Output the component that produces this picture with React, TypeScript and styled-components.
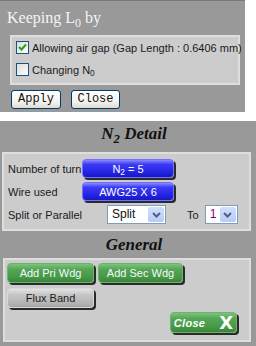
import React, { FunctionComponent } from 'react';
import styled, { createGlobalStyle, css } from 'styled-components';

const GlobalStyle = createGlobalStyle`
  html, body {
    margin: 0;
    padding: 0;
    background: #ffffff;
  }
  body {
    font-family: 'Liberation Sans', Arial, sans-serif;
    font-size: 11px;
    color: #111111;
  }
`;

const Page = styled.div`
  width: 256px;
  height: 346px;
  overflow: hidden;
  display: flex;
  flex-direction: column;
`;

const Panel = styled.div<{ wide?: boolean }>`
  background: #999999;
  width: ${({ wide }) => (wide ? '256px' : '245px')};
  box-sizing: border-box;
  display: flex;
  flex-direction: column;
`;

const TopPanel = styled(Panel)`
  height: 112px;
  border-top: 1px solid #7a7a7a;
  padding-top: 7px;
`;

const BottomPanel = styled(Panel)`
  margin-top: 9px;
  flex: 1;
  padding-top: 3px;
`;

const KeepTitle = styled.div`
  font-family: 'Liberation Serif', 'Times New Roman', serif;
  font-size: 16px;
  line-height: 20px;
  color: #f4f4f8;
  padding-left: 7px;
`;

const Sub = styled.span`
  font-size: 0.75em;
  position: relative;
  top: 0.35em;
`;

const Text = styled.span`
  white-space: nowrap;
`;

const SectionTitle = styled.div<{ gapTop?: number }>`
  font-family: 'Liberation Serif', 'Times New Roman', serif;
  font-style: italic;
  font-weight: bold;
  font-size: 17px;
  line-height: 20px;
  color: #111111;
  text-align: center;
  padding-left: 12px;
  margin-top: ${({ gapTop }) => gapTop || 0}px;
`;

const InsetBox = styled.div`
  background: #cccccc;
  border: 2px solid #dedede;
  box-sizing: border-box;
`;

const OptionBox = styled(InsetBox)`
  margin: 6px 0 0 10px;
  width: 230px;
  height: 50px;
  padding: 4px 0 0 4px;
  display: flex;
  flex-direction: column;
  gap: 9px;
`;

const OptionRow = styled.label`
  display: flex;
  align-items: center;
  gap: 3px;
  height: 13px;
  font-size: 11px;
  color: #1a1a1a;
  white-space: nowrap;
`;

const CheckBox = styled.span`
  width: 13px;
  height: 13px;
  box-sizing: border-box;
  border: 1px solid #1c5180;
  background: linear-gradient(135deg, #dcdcd7 0%, #f4f4f2 70%, #ffffff 100%);
  display: flex;
  align-items: center;
  justify-content: center;
  flex-shrink: 0;
`;

const ActionRow = styled.div`
  display: flex;
  gap: 10px;
  margin: 5px 0 0 11px;
`;

const PlainButton = styled.button<{ w: number }>`
  width: ${({ w }) => w}px;
  height: 19px;
  padding: 0;
  border: 1px solid #003c74;
  border-radius: 3px;
  background: linear-gradient(#ffffff 0%, #f5f4ef 60%, #dedbd0 100%);
  font-family: 'Liberation Mono', 'Courier New', monospace;
  font-size: 12px;
  color: #111111;
  line-height: 17px;
`;

const DetailBox = styled(InsetBox)`
  margin: 7px 0 0 2px;
  width: 249px;
  height: 79px;
  padding: 3px 0 0 4px;
  display: flex;
  flex-direction: column;
`;

const FieldRow = styled.div`
  display: flex;
  align-items: center;
  height: 23px;
`;

const FieldLabel = styled.span<{ w: number }>`
  width: ${({ w }) => w}px;
  font-size: 11px;
  color: #1a1a1a;
  white-space: nowrap;
`;

const bevel = css`
  border-radius: 4px;
  box-shadow: 2px 2px 0 #2a2a2a;
  font-family: 'Liberation Sans', Arial, sans-serif;
  font-size: 11px;
  padding: 0;
  display: flex;
  align-items: center;
  justify-content: center;
  white-space: nowrap;
`;

const BlueButton = styled.button`
  ${bevel}
  width: 92px;
  height: 19px;
  border: 1px solid #7070ff;
  background: linear-gradient(#8a8aff 0%, #3c3cf6 25%, #2424e4 70%, #1818c4 100%);
  color: #ffffff;
`;

const GreenButton = styled.button<{ w: number }>`
  ${bevel}
  width: ${({ w }) => w}px;
  height: 20px;
  border: 1px solid #6bb46b;
  background: linear-gradient(#7cc47c 0%, #55a555 30%, #459845 75%, #3a843a 100%);
  color: #f4f8ff;
`;

const GrayButton = styled.button`
  ${bevel}
  width: 87px;
  height: 20px;
  border: 1px solid #d8d8d8;
  background: linear-gradient(#e2e2e2 0%, #c4c4c4 35%, #b4b4b4 80%, #a4a4a4 100%);
  color: #1a1a1a;
`;

const Select = styled.div<{ w: number }>`
  width: ${({ w }) => w}px;
  height: 19px;
  box-sizing: border-box;
  border: 1px solid #7f9db9;
  background: #ffffff;
  display: flex;
  align-items: stretch;
`;

const SelectValue = styled.span<{ tone?: string }>`
  flex: 1;
  padding-left: 4px;
  font-size: 12px;
  line-height: 17px;
  color: ${({ tone }) => tone || '#111111'};
`;

const SelectArrow = styled.span`
  width: 16px;
  margin: 1px;
  border-radius: 2px;
  background: linear-gradient(#d2defc, #b7cbf8);
  display: flex;
  align-items: center;
  justify-content: center;
`;

const ToLabel = styled.span`
  margin: 0 6px 0 21px;
  font-size: 11px;
  color: #1a1a1a;
`;

const GeneralBox = styled(InsetBox)`
  margin: 3px 0 0 3px;
  width: 248px;
  height: 84px;
  padding: 3px 0 0 2px;
  display: flex;
  flex-direction: column;
  gap: 5px;
`;

const ButtonRow = styled.div`
  display: flex;
  gap: 4px;
`;

const CloseButton = styled(GreenButton)`
  align-self: flex-end;
  margin: -1px 12px 0 0;
  height: 21px;
  gap: 14px;
  color: #ffffff;
`;

const CloseText = styled.span`
  font-style: italic;
  font-weight: bold;
  font-size: 11px;
  letter-spacing: 0.3px;
`;

const CloseX = styled.span`
  font-family: 'DejaVu Sans', sans-serif;
  font-weight: bold;
  font-size: 18px;
  line-height: 18px;
`;

const Chevron: FunctionComponent = () => (
  <svg width='9' height='6' viewBox='0 0 9 6'>
    <path d='M1 1 L4.5 4.5 L8 1' stroke='#4d6185' strokeWidth='2' fill='none' />
  </svg>
);

const Tick: FunctionComponent = () => (
  <svg width='9' height='9' viewBox='0 0 9 9'>
    <path d='M1 4 L3.5 6.5 L8 1.5' stroke='#21a121' strokeWidth='2' fill='none' />
  </svg>
);

const App: FunctionComponent = () => (
  <Page>
    <GlobalStyle />
    <TopPanel>
      <KeepTitle>
        Keeping L<Sub>0</Sub> by
      </KeepTitle>
      <OptionBox>
        <OptionRow>
          <CheckBox>
            <Tick />
          </CheckBox>
          <Text>Allowing air gap (Gap Length : 0.6406 mm)</Text>
        </OptionRow>
        <OptionRow>
          <CheckBox />
          <Text>Changing N<Sub>0</Sub></Text>
        </OptionRow>
      </OptionBox>
      <ActionRow>
        <PlainButton w={ 50 }>Apply</PlainButton>
        <PlainButton w={ 49 }>Close</PlainButton>
      </ActionRow>
    </TopPanel>

    <BottomPanel wide>
      <SectionTitle>
        N<Sub>2</Sub> Detail
      </SectionTitle>
      <DetailBox>
        <FieldRow>
          <FieldLabel w={ 74 }>Number of turn</FieldLabel>
          <BlueButton>
            <Text>N<Sub>2</Sub> = 5</Text>
          </BlueButton>
        </FieldRow>
        <FieldRow>
          <FieldLabel w={ 74 }>Wire used</FieldLabel>
          <BlueButton>AWG25 X 6</BlueButton>
        </FieldRow>
        <FieldRow>
          <FieldLabel w={ 99 }>Split or Parallel</FieldLabel>
          <Select w={ 59 }>
            <SelectValue>Split</SelectValue>
            <SelectArrow>
              <Chevron />
            </SelectArrow>
          </Select>
          <ToLabel>To</ToLabel>
          <Select w={ 33 }>
            <SelectValue tone='#800080'>1</SelectValue>
            <SelectArrow>
              <Chevron />
            </SelectArrow>
          </Select>
        </FieldRow>
      </DetailBox>

      <SectionTitle gapTop={ 4 }>General</SectionTitle>
      <GeneralBox>
        <ButtonRow>
          <GreenButton w={ 87 }>Add Pri Wdg</GreenButton>
          <GreenButton w={ 85 }>Add Sec Wdg</GreenButton>
        </ButtonRow>
        <ButtonRow>
          <GrayButton>Flux Band</GrayButton>
        </ButtonRow>
        <CloseButton w={ 67 }>
          <CloseText>Close</CloseText>
          <CloseX>X</CloseX>
        </CloseButton>
      </GeneralBox>
    </BottomPanel>
  </Page>
);

export default App;
